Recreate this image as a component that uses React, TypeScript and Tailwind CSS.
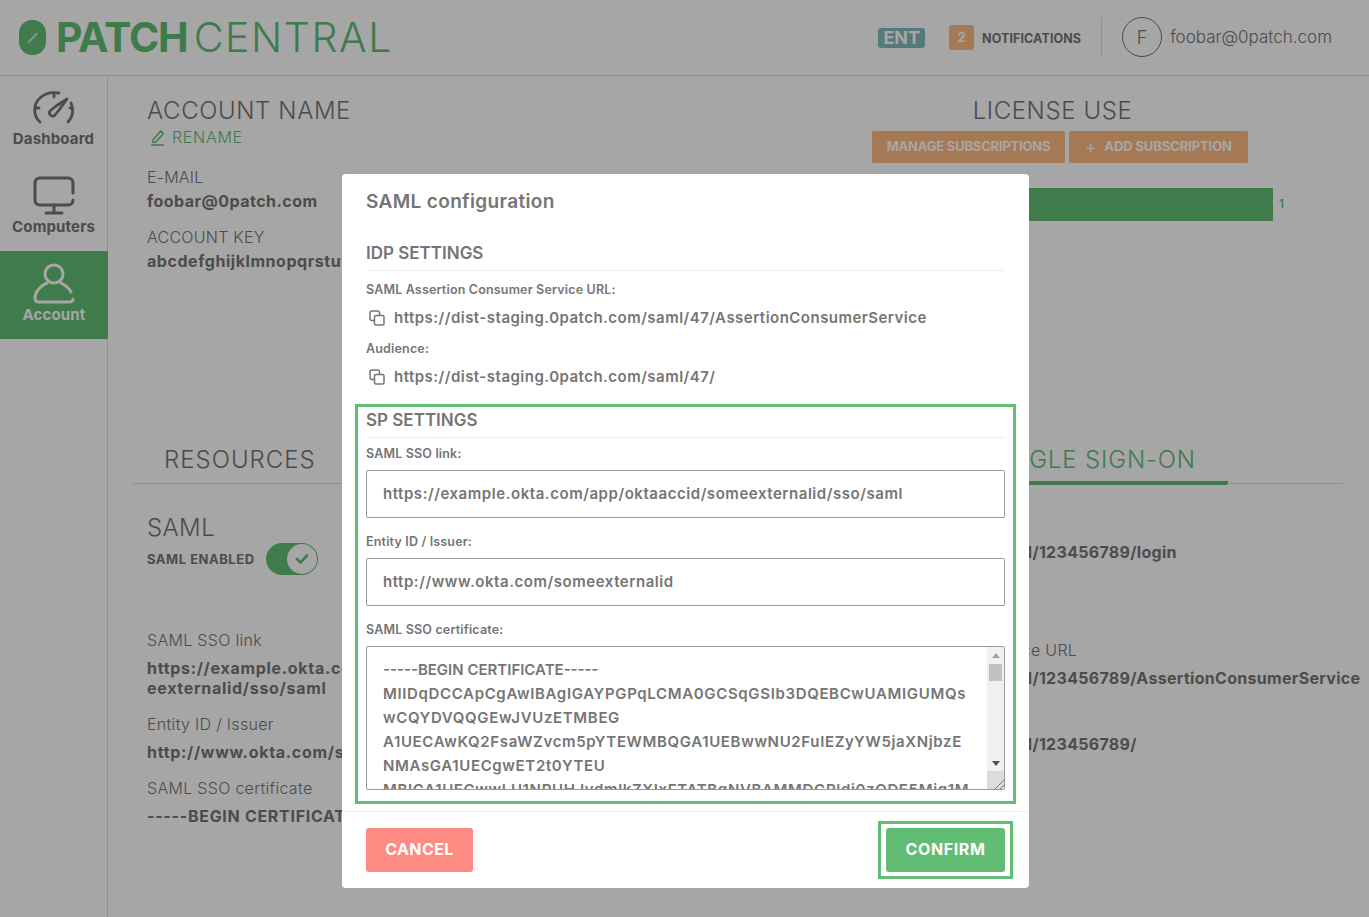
import { type ReactNode } from 'react';

const certLines = [
  '-----BEGIN CERTIFICATE-----',
  'MIIDqDCCApCgAwIBAgIGAYPGPqLCMA0GCSqGSIb3DQEBCwUAMIGUMQs',
  'wCQYDVQQGEwJVUzETMBEG',
  'A1UECAwKQ2FsaWZvcm5pYTEWMBQGA1UEBwwNU2FuIEZyYW5jaXNjbzE',
  'NMAsGA1UECgwET2t0YTEU',
  'MBIGA1UECwwLU1NPUHJvdmlkZXIxFTATBgNVBAMMDGRldi0zODE5Mjg1M',
];

function GaugeIcon() {
  return (
    <svg width="42" height="34" viewBox="0 0 42 34" fill="none" stroke="currentColor" strokeWidth="2.8" strokeLinecap="round" strokeLinejoin="round">
      <path d="M7 31 C0 25 0 13 7 7 C12 2 20 1 26 2" />
      <path d="M35 31 C40 26 41 18 38 12" />
      <path d="M21 2 V6 M3 17 H6 M37 17 H39" />
      <path d="M34 8 L23 15 L17 20 C15 23 19 27 22 24 L26 19 Z" />
    </svg>
  );
}

function MonitorIcon() {
  return (
    <svg width="42" height="40" viewBox="0 0 42 40" fill="none" stroke="currentColor" strokeWidth="3" strokeLinecap="round" strokeLinejoin="round">
      <path d="M40 17 V7 C40 4 38 2 35 2 H7 C4 2 2 4 2 7 V24 C2 27 4 29 7 29 H35 C38 29 40 27 40 24" />
      <path d="M21 29 V36 M13 37 H29" />
    </svg>
  );
}

function PersonIcon() {
  return (
    <svg width="42" height="42" viewBox="0 0 42 42" fill="none" stroke="currentColor" strokeWidth="3" strokeLinecap="round" strokeLinejoin="round">
      <circle cx="21" cy="11" r="9" />
      <path d="M14 20 C7 23 2 29 2 35 C2 38 4 39 6 39 H36 C38 39 40 38 40 36" />
      <path d="M28 20 C32 22 36 25 38 29" />
    </svg>
  );
}

function CopyIcon() {
  return (
    <svg width="16" height="16" viewBox="0 0 16 16" fill="none" stroke="#757575" strokeWidth="1.5" strokeLinejoin="round" className="shrink-0">
      <rect x="1" y="1" width="9.5" height="9.5" rx="2" />
      <rect x="5.5" y="5.5" width="9.5" height="9.5" rx="1.5" fill="#fff" />
    </svg>
  );
}

function NavItem({ icon, label, active }: { icon: ReactNode; label: string; active?: boolean }) {
  return (
    <div className={`flex h-[88px] flex-col items-center pt-[11px] ${active ? '-mr-px bg-[#62bd74] text-white' : 'text-[#757575]'}`}>
      <div className="flex h-[44px] items-center">{icon}</div>
      <div className="-mt-px text-[15px] leading-5 font-bold tracking-[0.15px]">{label}</div>
    </div>
  );
}

function Field({
  label,
  value,
  wrapClass = 'mt-[16px]',
  labelClass = '',
  valueClass = 'tracking-[0.7px]',
}: {
  label: string;
  value: string;
  wrapClass?: string;
  labelClass?: string;
  valueClass?: string;
}) {
  return (
    <div className={wrapClass}>
      <div className={`text-[16px] leading-5 font-light tracking-[0.3px] ${labelClass}`}>{label}</div>
      <div className={`mt-2 text-[16px] leading-5 font-bold whitespace-pre-line ${valueClass}`}>{value}</div>
    </div>
  );
}

function UrlRow({ url }: { url: string }) {
  return (
    <div className="flex h-[24px] items-center gap-[9px] pl-[3px]">
      <CopyIcon />
      <span className="text-[15px] font-semibold tracking-[0.48px]">{url}</span>
    </div>
  );
}

function FormLabel({ children }: { children: ReactNode }) {
  return <div className="text-[12.5px] leading-4 font-semibold tracking-[0.17px]">{children}</div>;
}

function TextInput({ value }: { value: string }) {
  return (
    <div className="mt-[8px] flex h-[48px] items-center rounded-[2px] border border-[#999] px-[16px] text-[15px] font-semibold tracking-[0.55px]">
      {value}
    </div>
  );
}

function SectionTitle({ children }: { children: ReactNode }) {
  return (
    <div className="border-b border-[#eee] pb-[3px] text-[17px] leading-[28px] font-semibold">
      {children}
    </div>
  );
}

function SamlModal() {
  return (
    <div className="fixed inset-0 flex justify-center bg-black/35 pt-[174px] pl-[2px]">
      <div className="flex h-[714px] w-[687px] flex-col rounded-[4px] bg-white text-[#757575]">
        <div className="flex-1 px-[24px]">
          <h2 className="pt-[14px] text-[19px] leading-[27px] font-semibold tracking-[0.35px]">SAML configuration</h2>
          <div className="mt-[24px]">
            <SectionTitle>IDP SETTINGS</SectionTitle>
          </div>
          <div className="mt-[11px]">
            <FormLabel>SAML Assertion Consumer Service URL:</FormLabel>
          </div>
          <div className="mt-[8px]">
            <UrlRow url="https://dist-staging.0patch.com/saml/47/AssertionConsumerService" />
          </div>
          <div className="mt-[11px]">
            <FormLabel>Audience:</FormLabel>
          </div>
          <div className="mt-[8px]">
            <UrlRow url="https://dist-staging.0patch.com/saml/47/" />
          </div>

          {/* highlighted SP part */}
          <div className="mt-[15px] -mx-[11px] h-[400px] border-[3px] border-[#62bd74] px-[8px]">
            <div className="-mt-px">
              <SectionTitle>SP SETTINGS</SectionTitle>
            </div>
            <div className="mt-[8px]">
              <FormLabel>SAML SSO link:</FormLabel>
            </div>
            <TextInput value="https://example.okta.com/app/oktaaccid/someexternalid/sso/saml" />
            <div className="mt-[16px]">
              <FormLabel>Entity ID / Issuer:</FormLabel>
            </div>
            <TextInput value="http://www.okta.com/someexternalid" />
            <div className="mt-[16px]">
              <FormLabel>SAML SSO certificate:</FormLabel>
            </div>
            <div className="mt-[8px] flex h-[144px] overflow-hidden rounded-[2px] border border-[#999]">
              <div className="flex-1 overflow-hidden px-[16px] pt-[11px] text-[15px] leading-[24px] font-semibold tracking-[0.65px] whitespace-nowrap">
                <div className="tracking-normal">{certLines[0]}</div>
                {certLines.slice(1).map((line) => (
                  <div key={line}>{line}</div>
                ))}
              </div>
              <div className="flex w-[17px] flex-col items-center bg-[#f1f1f1]">
                <div className="mt-[6px] h-0 w-0 border-x-[4px] border-b-[5px] border-x-transparent border-b-[#a3a3a3]" />
                <div className="mt-[6px] h-[17px] w-[13px] bg-[#c1c1c1]" />
                <div className="mt-[80px] h-0 w-0 border-x-[4px] border-t-[5px] border-x-transparent border-t-[#505050]" />
                <div className="mt-[5px] flex h-[18px] w-[17px] items-end justify-end bg-[#dcdcdc]">
                  <svg width="10" height="10" viewBox="0 0 10 10" stroke="#777" strokeWidth="1">
                    <path d="M1 10 L10 1 M6 10 L10 6" />
                  </svg>
                </div>
              </div>
            </div>
          </div>
        </div>

        <div className="flex h-[77px] items-start justify-between border-t border-[#eee] px-[24px] pt-[9px]">
          <button className="mt-[7px] h-[44px] w-[107px] rounded-[3px] bg-[#fd8b84] pb-[3px] text-[16px] font-bold tracking-[0.4px] text-white">CANCEL</button>
          <div className="-mr-[8px] border-[3px] border-[#62bd74] px-[5px] py-[4px]">
            <button className="block h-[44px] w-[119px] rounded-[3px] bg-[#62bd74] pb-[3px] text-[16px] font-bold tracking-[0.6px] text-white">CONFIRM</button>
          </div>
        </div>
      </div>
    </div>
  );
}

export default function App() {
  return (
    <div className="h-screen overflow-hidden bg-white font-['Inter','Liberation_Sans',sans-serif] text-[#757575]">
      <header className="flex h-[76px] items-center border-b border-[#ddd] pr-[37px] pl-[19px]">
        <div className="relative h-[35px] w-[27px] rounded-[13px] bg-[#62bd74]">
          <div className="absolute top-[16.5px] left-[7px] h-[1.5px] w-[13px] -rotate-45 bg-[#ddd]" />
        </div>
        <div className="mb-[2px] ml-[10px] flex text-[41px] leading-[48px] text-[#62bd74]">
          <span className="font-bold tracking-[-1.1px]">PATCH</span>
          <span className="ml-[6px] font-light tracking-[1.6px]">CENTRAL</span>
        </div>
        <div className="ml-auto flex items-center">
          <span className="rounded-[3px] bg-[#84babf] px-[5px] text-[18px] leading-[20px] font-bold text-white">ENT</span>
          <span className="ml-[24px] flex h-[25px] w-[25px] items-center justify-center rounded-[3px] bg-[#ffba83] text-[13px] font-bold text-white">2</span>
          <span className="mt-[3px] ml-[8px] text-[12.5px] font-bold tracking-[0.1px]">NOTIFICATIONS</span>
          <span className="mb-px ml-[20px] h-[40px] w-px bg-[#ddd]" />
          <span className="mb-px ml-[20px] flex h-[40px] w-[40px] items-center justify-center rounded-full border border-[#757575] text-[18px] font-light">F</span>
          <span className="ml-[8px] text-[17px] font-light">foobar@0patch.com</span>
        </div>
      </header>

      <div className="flex h-[841px]">
        <nav className="-mt-px w-[108px] shrink-0 border-r border-[#ddd]">
          <NavItem icon={<GaugeIcon />} label="Dashboard" />
          <NavItem icon={<MonitorIcon />} label="Computers" />
          <NavItem icon={<PersonIcon />} label="Account" active />
        </nav>

        <main className="flex-1">
          <section className="flex h-[364px] pt-[20px] pl-[39px]">
            <div className="w-[725px] shrink-0">
              <h1 className="text-[24px] leading-[30px] font-light tracking-[0.6px]">ACCOUNT NAME</h1>
              <div className="flex h-[22px] items-center gap-[6px] text-[#62bd74]">
                <svg width="16" height="17" viewBox="0 0 16 17" fill="none" stroke="currentColor" strokeWidth="1.5" strokeLinejoin="round" className="ml-[3px]">
                  <path d="M3 11 L10.5 2 L13.5 4.5 L6 13 L3 13.5 Z" />
                  <path d="M1 16 H14" />
                </svg>
                <span className="text-[16px] font-light tracking-[0.7px]">RENAME</span>
              </div>
              <div className="mt-[19px] text-[16px] leading-5 font-light tracking-[0.2px]">E-MAIL</div>
              <div className="mt-[4px] text-[16px] leading-5 font-bold tracking-[0.47px]">foobar@0patch.com</div>
              <div className="mt-[16px] text-[16px] leading-5 font-light tracking-[0.25px]">ACCOUNT KEY</div>
              <div className="mt-[4px] text-[16px] leading-5 font-bold tracking-[0.55px]">abcdefghijklmnopqrstuvwxyz0123456789</div>
            </div>
            <div className="w-[480px]">
              <h2 className="w-[361px] text-center text-[24px] leading-[30px] font-light tracking-[0.6px]">LICENSE USE</h2>
              <div className="mt-[5px] flex gap-[4px]">
                <span className="flex h-[32px] w-[193px] items-center justify-center rounded-[2px] bg-[#ffba83] text-[13px] font-bold tracking-[-0.2px] text-white">MANAGE SUBSCRIPTIONS</span>
                <span className="flex h-[32px] w-[179px] items-center justify-center gap-[8px] rounded-[2px] bg-[#ffba83] text-[13px] font-bold tracking-[-0.1px] text-white">
                  <span className="text-[17px] leading-none font-normal">+</span>
                  ADD SUBSCRIPTION
                </span>
              </div>
              <div className="mt-[25px] flex items-center">
                <div className="h-[33px] w-[401px] bg-[#62bd74]" />
                <span className="mb-px ml-[6px] text-[12px] font-medium text-[#62bd74]">1</span>
              </div>
            </div>
          </section>

          <div className="mr-[26px] ml-[24px] flex h-[44px] border-b border-[#ddd]">
            <div className="ml-[32px] w-[781px] pt-[5px] text-[24px] leading-[30px] font-light tracking-[1px]">RESOURCES</div>
            <div className="-mb-px h-[45px] w-[283px] rounded-r-[2px] border-b-[4px] border-[#62bd74] pt-[5px] pl-[42px] text-[24px] leading-[30px] font-light tracking-[0.85px] text-[#62bd74]">SINGLE SIGN-ON</div>
          </div>

          <section className="flex pl-[39px]">
            <div className="w-[647px] shrink-0">
              <div className="mt-[29px] text-[24px] leading-[30px] font-light tracking-[0.4px]">SAML</div>
              <div className="flex h-[32px] items-center gap-[11px]">
                <span className="mt-px text-[13px] font-bold tracking-[0.52px]">SAML ENABLED</span>
                <span className="flex h-[32px] w-[52px] items-center justify-end rounded-full bg-[#62bd74] p-px">
                  <span className="flex h-[30px] w-[30px] items-center justify-center rounded-full bg-white">
                    <svg width="14" height="12" viewBox="0 0 14 12" fill="none" stroke="#62bd74" strokeWidth="2.6" strokeLinecap="round" strokeLinejoin="round">
                      <path d="M2 6 L5.5 9.5 L12 2.5" />
                    </svg>
                  </span>
                </span>
              </div>
              <Field wrapClass="mt-[55px]" label="SAML SSO link" value={'https://example.okta.com/app/oktaaccid/som\neexternalid/sso/saml'} />
              <Field label="Entity ID / Issuer" value="http://www.okta.com/someexternalid" />
              <Field label="SAML SSO certificate" value="-----BEGIN CERTIFICATE-----" />
            </div>
            <div className="whitespace-nowrap">
              <Field wrapClass="mt-[30px]" valueClass="tracking-[0.3px]" label="SAML SSO login URL" value="https://dist.0patch.com/saml/123456789/login" />
              <Field wrapClass="mt-[78px]" labelClass="-ml-[24px]" valueClass="tracking-[0.3px]" label="SAML Assertion Consumer Service URL" value="https://dist.0patch.com/saml/123456789/AssertionConsumerService" />
              <Field wrapClass="mt-[18px]" valueClass="tracking-[0.3px]" label="Audience" value="https://dist.0patch.com/saml/123456789/" />
            </div>
          </section>
        </main>
      </div>

      <SamlModal />
    </div>
  );
}
